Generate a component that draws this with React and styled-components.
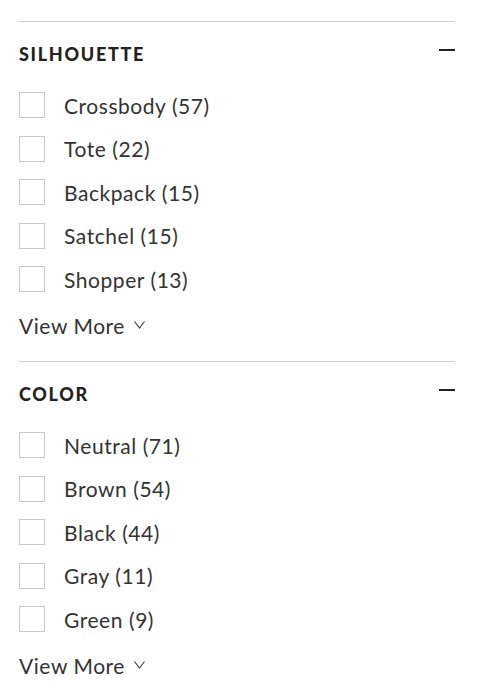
import React from 'react';
import styled, { createGlobalStyle } from 'styled-components';

const filters = [
  {
    title: 'SILHOUETTE',
    options: [
      ['Crossbody', 57],
      ['Tote', 22],
      ['Backpack', 15],
      ['Satchel', 15],
      ['Shopper', 13],
    ],
  },
  {
    title: 'COLOR',
    options: [
      ['Neutral', 71],
      ['Brown', 54],
      ['Black', 44],
      ['Gray', 11],
      ['Green', 9],
    ],
  },
];

const GlobalStyle = createGlobalStyle`
  body {
    margin: 0;
    background: #fff;
    font-family: Lato, "Open Sans", sans-serif;
    color: #222;
  }
`;

const Panel = styled.div`
  width: 436px;
  padding: 21px 0 0 19px;
`;

const Section = styled.section`
  border-top: 1px solid #cfcfcf;
  padding-bottom: 23px;
`;

const Header = styled.div`
  height: 64px;
  display: flex;
  align-items: center;
  justify-content: space-between;
`;

const Title = styled.h3`
  margin: 0;
  font-size: 18px;
  font-weight: 900;
  letter-spacing: 1.7px;
  line-height: 20px;
  color: #222;
`;

const Minus = styled.span`
  width: 16px;
  height: 2.5px;
  background: #222;
  margin-top: -8px;
`;

const List = styled.ul`
  list-style: none;
  margin: 0;
  padding: 6px 0 0;
  display: flex;
  flex-direction: column;
  gap: 17.5px;
`;

const Row = styled.li`
  display: flex;
  align-items: center;
  height: 26px;
  gap: 19px;
`;

const Box = styled.span`
  width: 26px;
  height: 26px;
  box-sizing: border-box;
  border: 1px solid #c8c8c8;
  background: #fff;
`;

const Label = styled.span`
  font-size: 21px;
  color: #333;
  letter-spacing: 0.55px;
`;

const More = styled.button`
  margin-top: 20px;
  padding: 0;
  border: 0;
  background: none;
  height: 26px;
  display: flex;
  align-items: center;
  gap: 9px;
  font-family: inherit;
  font-size: 21px;
  color: #333;
  letter-spacing: 0.55px;
`;

const Chevron = () => (
  <svg width="11" height="8" viewBox="0 0 11 8">
    <path d="M0.5 0.5 L5.5 7 L10.5 0.5" fill="none" stroke="#444" strokeWidth="1.2" />
  </svg>
);

export default function App() {
  return (
    <>
      <GlobalStyle />
      <Panel>
        {filters.map((f) => (
          <Section key={f.title}>
            <Header>
              <Title>{f.title}</Title>
              <Minus />
            </Header>
            <List>
              {f.options.map(([name, count]) => (
                <Row key={name}>
                  <Box />
                  <Label>
                    {name} ({count})
                  </Label>
                </Row>
              ))}
            </List>
            <More>
              View More <Chevron />
            </More>
          </Section>
        ))}
      </Panel>
    </>
  );
}
